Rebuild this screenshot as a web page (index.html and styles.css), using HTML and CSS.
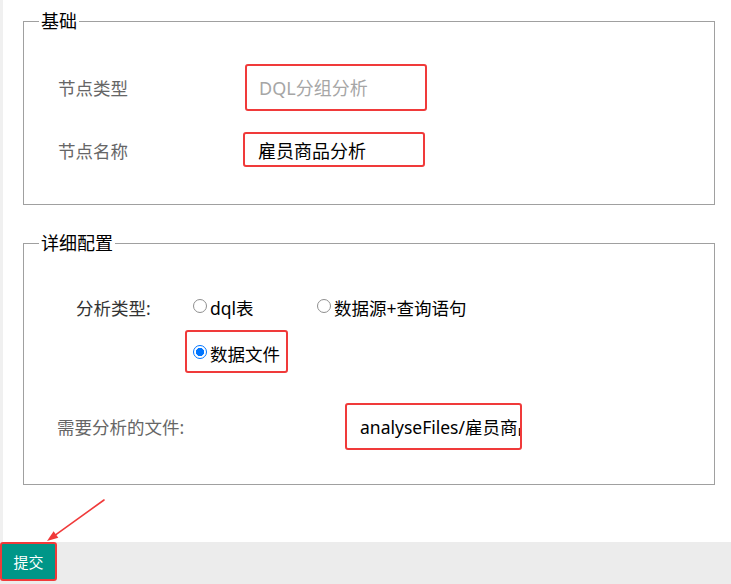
FILE: index.html
```html
<!DOCTYPE html>
<html lang="zh-CN">
<head>
<meta charset="utf-8">
<title>节点配置</title>
<link rel="stylesheet" href="styles.css">
</head>
<body>
<div class="page">
  <form class="content">
    <fieldset class="group group-basic">
      <legend class="group-title">基础</legend>
      <div class="field field-type">
        <label class="field-label">节点类型</label>
        <input class="text-input input-type" type="text" placeholder="DQL分组分析">
      </div>
      <div class="field field-name">
        <label class="field-label label-name">节点名称</label>
        <input class="text-input input-name" type="text" value="雇员商品分析">
      </div>
    </fieldset>

    <fieldset class="group group-detail">
      <legend class="group-title">详细配置</legend>
      <div class="radio-field">
        <span class="radio-label">分析类型:</span>
        <div class="radio-group">
          <label class="radio-opt opt-first"><input class="radio" type="radio" name="atype">dql表</label>
          <label class="radio-opt"><input class="radio" type="radio" name="atype">数据源+查询语句</label>
          <label class="radio-opt opt-marked"><input class="radio" type="radio" name="atype" checked>数据文件</label>
        </div>
      </div>
      <div class="field field-file">
        <label class="field-label label-file">需要分析的文件:</label>
        <input class="text-input input-file" type="text" value="analyseFiles/雇员商品分析.xlsx">
      </div>
    </fieldset>
  </form>

  <div class="footer">
    <button class="submit" type="button">提交</button>
  </div>

  <svg class="arrow" width="731" height="584" viewBox="0 0 731 584" aria-hidden="true">
    <line x1="104" y1="500" x2="55.9" y2="534.6" stroke="#f03a3a" stroke-width="1.6" stroke-linecap="round"/>
    <polygon points="47,541 58.3,537.8 53.6,531.3" fill="#f03a3a"/>
  </svg>
</div>
</body>
</html>
```

FILE: styles.css
```css
* {
  box-sizing: border-box;
}

html, body {
  margin: 0;
  padding: 0;
  background: #ffffff;
}

body {
  font-family: "Noto Sans", "Noto Sans CJK SC", sans-serif;
  font-size: 18px;
  color: #000;
}

.page {
  position: relative;
  width: 731px;
  height: 584px;
  display: flex;
  flex-direction: column;
  overflow: hidden;
}

.content {
  flex: 1;
  border-left: 3px solid #f0f0f0;
  padding: 9px 16px 0 20px;
  margin: 0;
}

.group {
  margin: 0;
  padding: 0;
  border: 1px solid #a0a0a0;
  min-inline-size: 0;
}

.group-basic {
  padding-bottom: 37px;
}

.group-detail {
  margin-top: 26px;
  padding-bottom: 34px;
}

.group-title {
  margin-left: 15px;
  padding: 0 2px;
  font-size: 18px;
  line-height: 24px;
  color: #000;
}

.field {
  display: flex;
  align-items: center;
}

.field-type {
  margin-top: 31px;
  padding-left: 34px;
}

.field-name {
  margin-top: 21px;
  padding-left: 34px;
}

.field-label {
  color: #666;
  font-size: 17.5px;
  line-height: 24px;
  width: 187px;
  flex: none;
}

.label-name {
  position: relative;
  top: 1px;
}

.text-input {
  font-family: "Noto Sans", "Noto Sans CJK SC", sans-serif;
  font-size: 18px;
  color: #000;
  border: 2px solid #f03a3a;
  border-radius: 3px;
  background: #fff;
  outline: none;
  margin: 0;
}

.text-input::placeholder {
  color: #a6a6a6;
}

.input-type {
  width: 182px;
  height: 47px;
  padding: 0 0 0 12px;
}

.input-name {
  width: 182px;
  height: 35px;
  padding: 0 0 0 13px;
  margin-left: -2px;
}

.radio-field {
  display: flex;
  align-items: flex-start;
  margin-top: 30px;
  padding-left: 52px;
}

.radio-label {
  width: 112px;
  flex: none;
  line-height: 46px;
  color: #333;
  font-size: 17.5px;
}

.radio-group {
  display: flex;
  flex-wrap: wrap;
  width: 300px;
}

.radio-opt {
  position: relative;
  display: inline-block;
  line-height: 46px;
  height: 46px;
  color: #000;
  font-size: 17.5px;
  white-space: nowrap;
}

.radio {
  -webkit-appearance: none;
  appearance: none;
  display: inline-block;
  width: 14px;
  height: 14px;
  margin: 0 3px 0 5px;
  border: 1px solid #8f8f8f;
  border-radius: 50%;
  background: #fff;
  vertical-align: 2px;
}

.radio:checked {
  border: 1.5px solid #0075ff;
  background: radial-gradient(circle, #0075ff 0 3.8px, #fff 4.4px);
}

.opt-first {
  width: 124px;
}

.opt-marked::after {
  content: "";
  position: absolute;
  left: -3px;
  right: -8px;
  top: -1px;
  bottom: 4px;
  border: 2px solid #f03a3a;
  border-radius: 3px;
}

.field-file {
  margin-top: 26px;
  padding-left: 33px;
}

.label-file {
  width: 288px;
}

.input-file {
  width: 177px;
  height: 47px;
  padding: 0 0 0 13px;
  font-size: 17.5px;
}

.footer {
  flex: none;
  height: 42px;
  background: #ececec;
  display: flex;
  align-items: flex-start;
}

.submit {
  width: 57px;
  height: 39px;
  margin: 0;
  padding: 0;
  background: #009688;
  color: #fff;
  border: 2px solid #f03a3a;
  border-radius: 3px;
  font-family: "Noto Sans CJK SC", sans-serif;
  font-size: 15px;
  line-height: 35px;
}

.arrow {
  position: absolute;
  left: 0;
  top: 0;
  pointer-events: none;
}
```
